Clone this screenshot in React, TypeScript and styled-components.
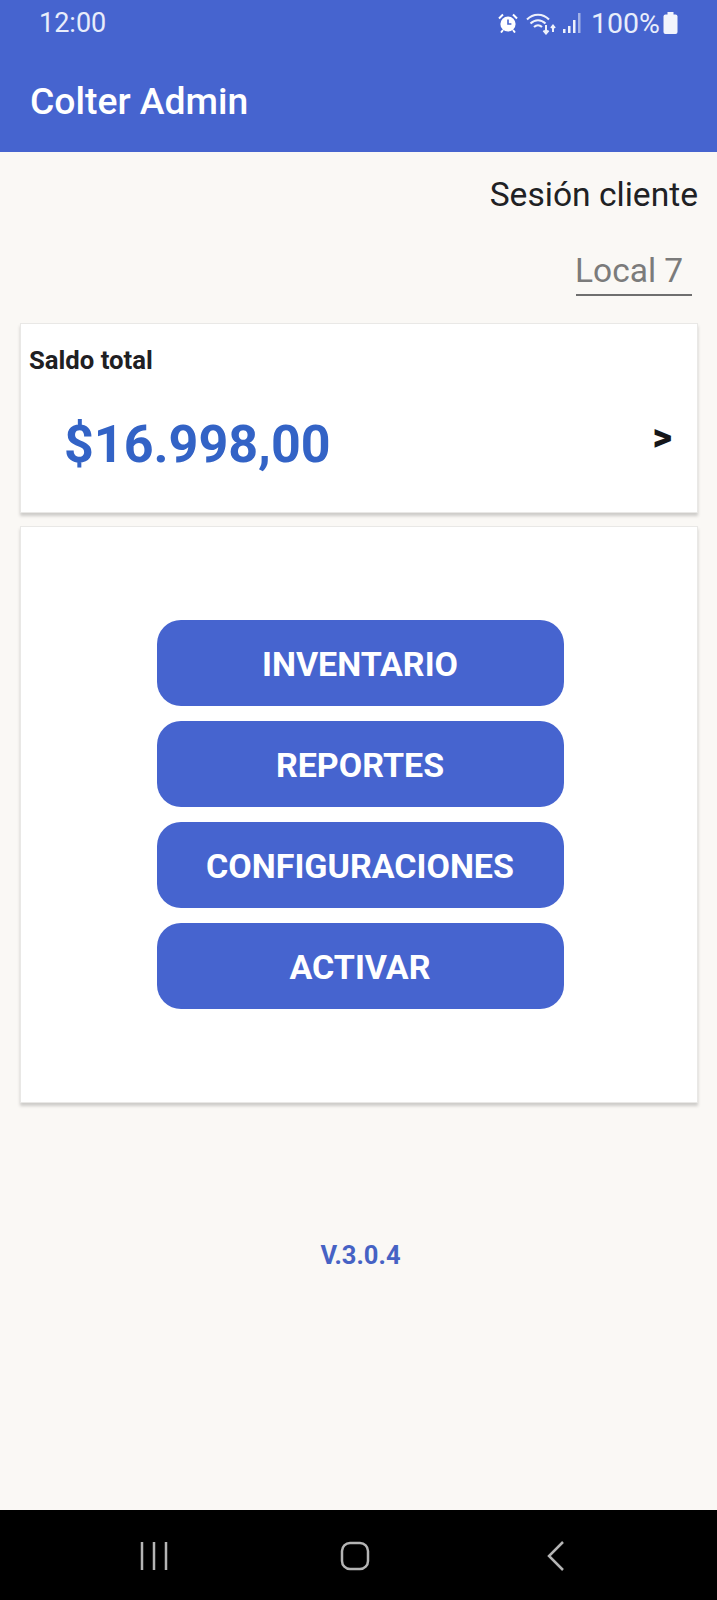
import React from "react";
import styled, { createGlobalStyle } from "styled-components";

const GlobalStyle = createGlobalStyle`
  html, body {
    margin: 0;
    padding: 0;
    background: #faf8f5;
    font-family: Roboto, "Liberation Sans", sans-serif;
  }
  * { box-sizing: border-box; }
`;

const Screen = styled.div`
  width: 717px;
  height: 1600px;
  display: flex;
  flex-direction: column;
  background: #faf8f5;
`;

const Header = styled.header`
  height: 152px;
  background: #4664cf;
  color: #fff;
  display: flex;
  flex-direction: column;
  padding: 0 31px 0 30px;
`;

const StatusBar = styled.div`
  height: 46px;
  display: flex;
  align-items: center;
  justify-content: space-between;
  padding-left: 9px;
  color: #e8edfb;
`;

const StatusText = styled.span<{ $size: number }>`
  font-size: ${(p) => p.$size}px;
  font-weight: 400;
`;

const StatusIcons = styled.div`
  display: flex;
  align-items: center;
  gap: 6px;
  margin-right: 8px;
`;

const StatusSvg = styled.svg<{ $after?: number }>`
  display: block;
  margin-right: ${(p) => p.$after ?? 0}px;
`;

const Title = styled.h1`
  margin: 32px 0 0;
  font-size: 37.3px;
  line-height: 46px;
  font-weight: 500;
  color: #fff;
`;

const Content = styled.main`
  flex: 1;
  display: flex;
  flex-direction: column;
  padding: 22px 19px 0 20px;
`;

const Session = styled.div`
  text-align: right;
  font-size: 33.6px;
  line-height: 42px;
  color: #202124;
`;

const LocalRow = styled.div`
  display: flex;
  justify-content: flex-end;
  margin-top: 33px;
  padding-right: 6px;
`;

const LocalSelect = styled.div`
  width: 116px;
  height: 47px;
  font-size: 33.5px;
  line-height: 44px;
  text-indent: -1px;
  color: #7b7b7b;
  border-bottom: 2px solid #6f6f6f;
`;

const Card = styled.section`
  background: #fff;
  border: 1px solid #e9e8e6;
  box-shadow: 0 3px 3px rgba(0, 0, 0, 0.18);
`;

const BalanceCard = styled(Card)`
  height: 190px;
  margin-top: 27px;
  padding: 21px 25px 0 8px;
`;

const BalanceLabel = styled.div`
  font-size: 25.7px;
  line-height: 30px;
  font-weight: 700;
  color: #1f2023;
`;

const BalanceRow = styled.div`
  display: flex;
  align-items: flex-start;
  justify-content: space-between;
  margin-top: 37px;
  padding-left: 35px;
`;

const Amount = styled.div`
  font-size: 52px;
  line-height: 66px;
  font-weight: 700;
  color: #3363c6;
`;

const Arrow = styled.span`
  margin-top: 5px;
  font-size: 38px;
  line-height: 40px;
  font-weight: 900;
  color: #15161a;
`;

const MenuCard = styled(Card)`
  height: 577px;
  margin-top: 13px;
  display: flex;
  flex-direction: column;
  align-items: center;
  gap: 15px;
  padding: 93px 0 0 2px;
`;

const MenuButton = styled.button`
  width: 407px;
  height: 86px;
  border: 0;
  padding: 2px 0 0;
  border-radius: 24px;
  background: #4664cf;
  color: #fff;
  font-family: inherit;
  font-size: 34px;
  font-weight: 700;
`;

const Version = styled.div`
  margin-top: 137px;
  padding-left: 3px;
  text-align: center;
  font-size: 25.5px;
  line-height: 30px;
  font-weight: 700;
  color: #4662c4;
`;

const NavBar = styled.nav`
  height: 90px;
  background: #000;
  display: flex;
  align-items: flex-start;
  gap: 171px;
  padding: 31px 0 0 139px;
  color: #b5b5b5;
`;

const NavIcon = styled.svg`
  display: block;
  fill: none;
  stroke: currentColor;
`;

const BackIcon = styled(NavIcon)`
  margin-left: 5px;
`;

const AlarmIcon = () => (
  <StatusSvg $after={2} width="20" height="20" viewBox="0 0 20 20">
    <circle cx="10" cy="11" r="7.6" fill="#fff" />
    <path d="M10 6.500V11h3.400" fill="none" stroke="#4664cf" strokeWidth="1.600" />
    <path d="M1 5.500 5 1.500M19 5.500l-4-4M5 17l-2 2.500M15 17l2 2.500" stroke="#fff" strokeWidth="2" />
  </StatusSvg>
);

const WifiIcon = () => (
  <StatusSvg width="30" height="24" viewBox="0 0 30 24" fill="none" stroke="#eef1fb" strokeWidth="2">
    <path d="M1 8.500C7 2 17 2 23 8.500" />
    <path d="M4.500 12.500C9 8 15 8 19.500 12.500" />
    <path d="M8 16c2.500-2.500 5.500-2.500 8 0" />
    <path d="M20 14v8M17.500 19.500 20 22.500l2.500-3" />
    <path d="M27 21v-6M25 17l2-2.500 2 2.500" />
  </StatusSvg>
);

const SignalIcon = () => (
  <StatusSvg $after={3} width="20" height="22" viewBox="0 0 20 22" fill="#eef1fb">
    <rect x="1" y="17" width="2.500" height="4" />
    <rect x="6" y="14" width="2.500" height="7" />
    <rect x="11" y="8" width="2.500" height="13" />
    <rect x="16" y="1" width="2.500" height="20" opacity="0.55" />
  </StatusSvg>
);

const BatteryIcon = () => (
  <StatusSvg width="15" height="22" viewBox="0 0 15 22" fill="#f2f4fc">
    <rect x="4.500" y="0" width="6" height="3" />
    <rect x="0.500" y="2.500" width="14" height="19.500" rx="2" />
  </StatusSvg>
);

const TightStatusText = styled(StatusText)`
  margin-right: -3px;
`;

const MENU_ITEMS = ["INVENTARIO", "REPORTES", "CONFIGURACIONES", "ACTIVAR"];

export default function App() {
  return (
    <Screen>
      <GlobalStyle />
      <Header>
        <StatusBar>
          <StatusText $size={27}>12:00</StatusText>
          <StatusIcons>
            <AlarmIcon />
            <WifiIcon />
            <SignalIcon />
            <TightStatusText $size={28.5}>100%</TightStatusText>
            <BatteryIcon />
          </StatusIcons>
        </StatusBar>
        <Title>Colter Admin</Title>
      </Header>
      <Content>
        <Session>Sesión cliente</Session>
        <LocalRow>
          <LocalSelect>Local 7</LocalSelect>
        </LocalRow>
        <BalanceCard>
          <BalanceLabel>Saldo total</BalanceLabel>
          <BalanceRow>
            <Amount>$16.998,00</Amount>
            <Arrow>&gt;</Arrow>
          </BalanceRow>
        </BalanceCard>
        <MenuCard>
          {MENU_ITEMS.map((item) => (
            <MenuButton key={item}>{item}</MenuButton>
          ))}
        </MenuCard>
        <Version>V.3.0.4</Version>
      </Content>
      <NavBar>
        <NavIcon width="30" height="30" viewBox="0 0 30 30" strokeWidth="2.500">
          <path d="M3 1v28M15 1v28M27 1v28" />
        </NavIcon>
        <NavIcon width="30" height="30" viewBox="0 0 30 30" strokeWidth="2.500">
          <rect x="2" y="2" width="26" height="26" rx="8" />
        </NavIcon>
        <BackIcon width="20" height="30" viewBox="0 0 20 30" strokeWidth="2.500">
          <path d="M17 1 3 15l14 14" />
        </BackIcon>
      </NavBar>
    </Screen>
  );
}
